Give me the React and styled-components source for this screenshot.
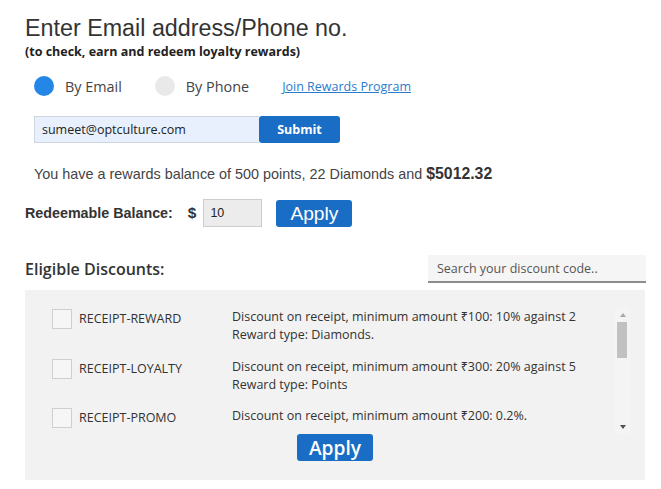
import React from "react";
import styled, { createGlobalStyle } from "styled-components";

const GlobalStyle = createGlobalStyle`
  body {
    margin: 0;
    background: #fff;
    font-family: "Open Sans", "Noto Sans", sans-serif;
  }
`

const Page = styled.div`
  width: 621px;
  padding: 14px 0 0 25px;
`

const Title = styled.h1`
  margin: 0;
  font-family: "Liberation Sans", Arial, sans-serif;
  font-weight: normal;
  font-size: 23.3px;
  line-height: 28px;
  color: #333;
`

const Subtitle = styled.p`
  margin: 2px 0 0;
  font-size: 12.5px;
  font-weight: 700;
  line-height: 16px;
  color: #222;
`

const Form = styled.div`
  padding-left: 9px;
`

const RadioRow = styled.div`
  display: flex;
  align-items: center;
  gap: 33px;
  height: 28px;
  margin-top: 12px;
`

const RadioOption = styled.label`
  display: flex;
  align-items: center;
  gap: 11px;
  font-size: 14.4px;
  color: #444;
`

const Dot = styled.span`
  width: 20px;
  height: 20px;
  border-radius: 50%;
  background: ${p => (p.$checked ? "#2486e6" : "#e9e9e9")};
`

const JoinLink = styled.a`
  font-size: 12.5px;
  color: #2b7bcb;
  text-decoration: underline;
`

const EmailRow = styled.div`
  display: flex;
  margin-top: 16px;
  height: 27px;
`

const EmailInput = styled.input`
  box-sizing: border-box;
  width: 225px;
  height: 27px;
  padding: 0 7px;
  border: 1px solid #cfd6e0;
  border-right: none;
  background: #e8f0fe;
  font-family: "Open Sans", sans-serif;
  font-size: 12.5px;
  color: #222;
  outline: none;
`

const SubmitButton = styled.button`
  width: 81px;
  height: 27px;
  border: none;
  border-radius: 3px;
  background: #1a6dc4;
  color: #fff;
  font-family: "Open Sans", sans-serif;
  font-size: 12.5px;
  font-weight: 700;
`

const Balance = styled.p`
  margin: 21px 0 0;
  font-family: "Liberation Sans", Arial, sans-serif;
  font-size: 14.4px;
  line-height: 20px;
  color: #444;

  strong {
    font-size: 15.8px;
    color: #333;
  }
`

const RedeemRow = styled.div`
  display: flex;
  align-items: center;
  height: 28px;
  margin-top: 15px;
  font-family: "Liberation Sans", Arial, sans-serif;
  font-weight: 700;
  color: #333;
`

const RedeemLabel = styled.span`
  font-size: 14.3px;
  margin-right: 15px;
`

const Dollar = styled.span`
  font-size: 15.4px;
  margin-right: 7px;
`

const AmountInput = styled.input`
  box-sizing: border-box;
  width: 59px;
  height: 28px;
  padding: 0 6px;
  border: 1px solid #cdcdcd;
  background: #ececec;
  font-family: "Liberation Sans", Arial, sans-serif;
  font-size: 12.5px;
  color: #222;
  outline: none;
`

const ApplyButton = styled.button`
  flex: none;
  box-sizing: border-box;
  width: 76px;
  height: 27px;
  margin-left: ${p => p.$offset || 0}px;
  padding: 0;
  border: none;
  border-radius: 3px;
  background: #1a6dc4;
  color: #fff;
  font-family: ${p => (p.$open ? '"Open Sans", sans-serif' : '"Liberation Sans", Arial, sans-serif')};
  font-size: 19.2px;
  font-weight: ${p => (p.$open ? 600 : 400)};
  line-height: 27px;
`

const SectionHeader = styled.div`
  display: flex;
  justify-content: space-between;
  align-items: center;
  height: 28px;
  margin-top: 28px;
`

const SectionTitle = styled.h3`
  margin: 0;
  font-size: 16px;
  font-weight: 600;
  color: #333;
`

const SearchInput = styled.input`
  flex: none;
  box-sizing: border-box;
  width: 218px;
  height: 28px;
  padding: 0 9px;
  border: none;
  border-bottom: 2px solid #8c8c8c;
  background: #f5f5f5;
  font-family: "Open Sans", sans-serif;
  font-size: 12.5px;
  outline: none;

  &::placeholder {
    color: #555;
  }
`

const Panel = styled.div`
  box-sizing: border-box;
  width: 620px;
  height: 190px;
  margin-top: 7px;
  padding: 17px 0 19px;
  background: #f2f2f2;
  display: flex;
  flex-direction: column;
  align-items: center;
`

const ListArea = styled.div`
  align-self: stretch;
  display: flex;
  height: 127px;
  margin: 0 15px 0 27px;
`

const List = styled.div`
  flex: 1;
  overflow: hidden;
  padding-top: 1px;
`

const Row = styled.div`
  display: grid;
  grid-template-columns: 20px 146px 1fr;
  column-gap: 7px;
  align-items: start;
  min-height: 49.5px;
  font-size: 12.5px;
  line-height: 18px;
  color: #333;
`

const Box = styled.span`
  box-sizing: border-box;
  width: 20px;
  height: 20px;
  margin-top: 1px;
  border: 1px solid #cfcfcf;
  background: #f6f6f6;
`

const Code = styled.span`
  margin-top: 2px;
`

const Scrollbar = styled.div`
  width: 15px;
  display: flex;
  flex-direction: column;
  background: #f4f4f4;
`

const Arrow = styled.div`
  height: 15px;
  display: flex;
  align-items: center;
  justify-content: center;

  &::after {
    content: "";
    border-left: 3.5px solid transparent;
    border-right: 3.5px solid transparent;
    ${p => (p.$down ? "border-top: 4px solid #505050;" : "border-bottom: 4px solid #a8a8a8;")}
  }
`

const Track = styled.div`
  flex: 1;
`

const Thumb = styled.div`
  height: 36px;
  margin: 0 3px 0 2px;
  background: #c1c1c1;
`

const discounts = [
  { code: "RECEIPT-REWARD", lines: ["Discount on receipt, minimum amount ₹100: 10% against 2", "Reward type: Diamonds."] },
  { code: "RECEIPT-LOYALTY", lines: ["Discount on receipt, minimum amount ₹300: 20% against 5", "Reward type: Points"] },
  { code: "RECEIPT-PROMO", lines: ["Discount on receipt, minimum amount ₹200: 0.2%."] },
]

export default function App() {
  return (
    <Page>
      <GlobalStyle />
      <Title>Enter Email address/Phone no.</Title>
      <Subtitle>(to check, earn and redeem loyalty rewards)</Subtitle>

      <Form>
        <RadioRow>
          <RadioOption><Dot $checked />By Email</RadioOption>
          <RadioOption><Dot />By Phone</RadioOption>
          <JoinLink href="#">Join Rewards Program</JoinLink>
        </RadioRow>

        <EmailRow>
          <EmailInput defaultValue="sumeet@optculture.com" />
          <SubmitButton>Submit</SubmitButton>
        </EmailRow>

        <Balance>
          You have a rewards balance of 500 points, 22 Diamonds and <strong>$5012.32</strong>
        </Balance>
      </Form>

      <RedeemRow>
        <RedeemLabel>Redeemable Balance:</RedeemLabel>
        <Dollar>$</Dollar>
        <AmountInput defaultValue="10" />
        <ApplyButton $offset={14}>Apply</ApplyButton>
      </RedeemRow>

      <SectionHeader>
        <SectionTitle>Eligible Discounts:</SectionTitle>
        <SearchInput placeholder="Search your discount code.." />
      </SectionHeader>

      <Panel>
        <ListArea>
          <List>
            {discounts.map(item => (
              <Row key={item.code}>
                <Box />
                <Code>{item.code}</Code>
                <div>
                  {item.lines.map(line => <div key={line}>{line}</div>)}
                </div>
              </Row>
            ))}
          </List>
          <Scrollbar>
            <Arrow />
            <Track><Thumb /></Track>
            <Arrow $down />
          </Scrollbar>
        </ListArea>
        <ApplyButton $open>Apply</ApplyButton>
      </Panel>
    </Page>
  );
}
